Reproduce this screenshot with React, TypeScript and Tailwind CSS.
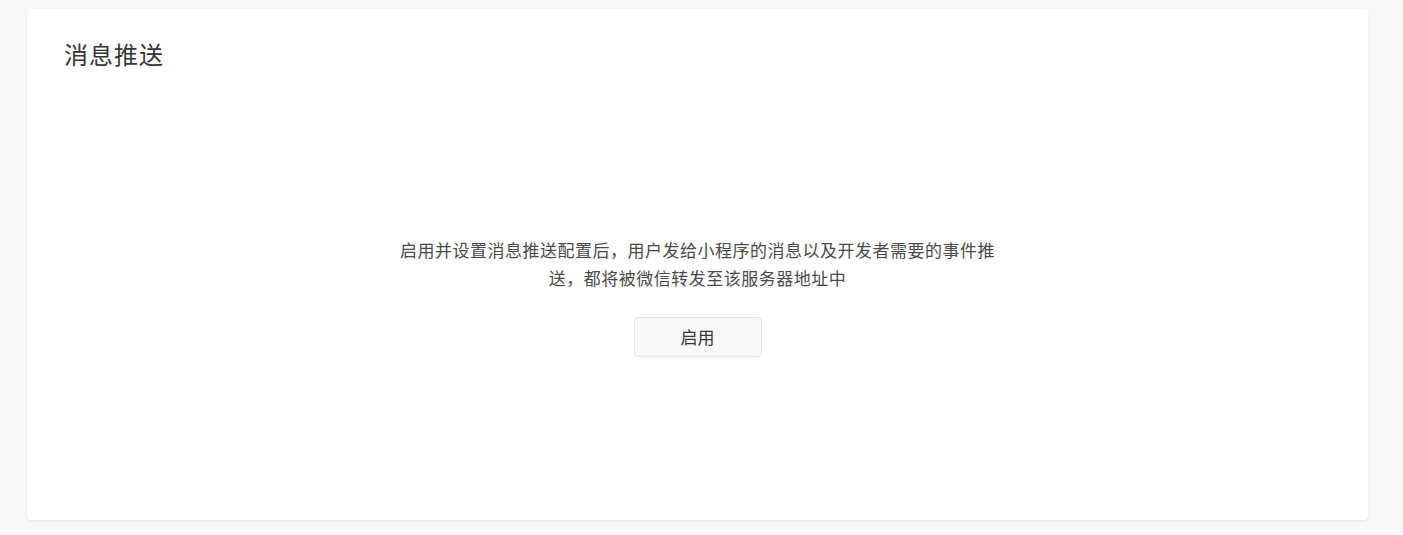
import React from "react";

export default function App() {
  return (
    <div
      className="min-h-[535px] w-full bg-[#f6f7f9] pt-[9px] pl-[27px] pr-[35px] pb-[15px]"
      style={{ fontFamily: '"Noto Sans CJK SC", "Noto Sans", sans-serif' }}
    >
      <div className="flex h-[511px] flex-col rounded-[4px] bg-white shadow-[0_1px_2px_rgba(0,0,0,0.08)]">
        <div className="pl-[37px] pt-[29px] text-[24px] leading-[32px] tracking-[1px] text-[#353535]">
          消息推送
        </div>
        <div className="flex flex-col items-center pt-[166px]">
          <p className="w-[600px] text-center text-[17px] leading-[28px] tracking-[0.5px] text-[#4a4a4a]">
            启用并设置消息推送配置后，用户发给小程序的消息以及开发者需要的事件推送，都将被微信转发至该服务器地址中
          </p>
          <button className="mt-[25px] h-[40px] w-[128px] rounded-[4px] border border-[#e4e4e4] bg-[#f9f9f9] text-[17px] text-[#353535]">
            启用
          </button>
        </div>
      </div>
    </div>
  );
}
